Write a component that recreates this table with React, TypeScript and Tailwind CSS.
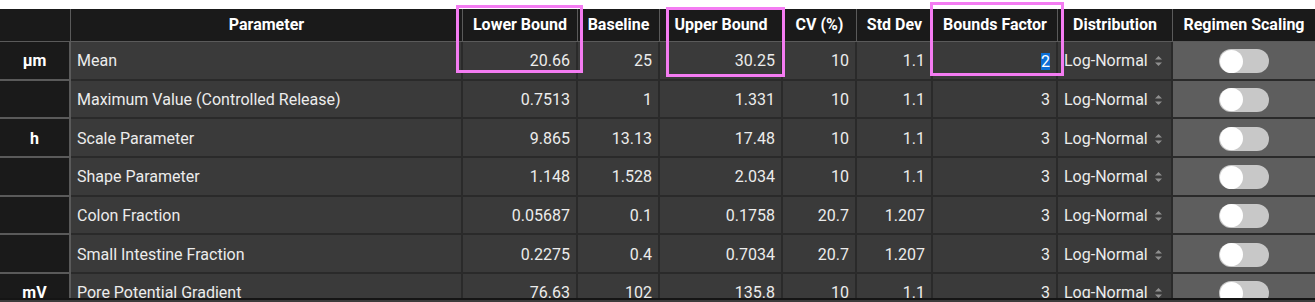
const rows = [
  { unit: 'µm', name: 'Mean', lower: '20.66', base: '25', upper: '30.25', cv: '10', sd: '1.1', factor: '2', selected: true },
  { unit: '', name: 'Maximum Value (Controlled Release)', lower: '0.7513', base: '1', upper: '1.331', cv: '10', sd: '1.1', factor: '3' },
  { unit: 'h', name: 'Scale Parameter', lower: '9.865', base: '13.13', upper: '17.48', cv: '10', sd: '1.1', factor: '3' },
  { unit: '', name: 'Shape Parameter', lower: '1.148', base: '1.528', upper: '2.034', cv: '10', sd: '1.1', factor: '3' },
  { unit: '', name: 'Colon Fraction', lower: '0.05687', base: '0.1', upper: '0.1758', cv: '20.7', sd: '1.207', factor: '3' },
  { unit: '', name: 'Small Intestine Fraction', lower: '0.2275', base: '0.4', upper: '0.7034', cv: '20.7', sd: '1.207', factor: '3' },
  { unit: 'mV', name: 'Pore Potential Gradient', lower: '76.63', base: '102', upper: '135.8', cv: '10', sd: '1.1', factor: '3' },
];

const headers = ['', 'Parameter', 'Lower Bound', 'Baseline', 'Upper Bound', 'CV (%)', 'Std Dev', 'Bounds Factor', 'Distribution', 'Regimen Scaling'];

const cols = 'grid grid-cols-[71px_392px_115px_82px_123px_74px_76px_125px_115px_142px]';

const SelectArrows = () => (
  <svg width="9" height="14" viewBox="0 0 9 14" className="shrink-0">
    <path d="M1 5.5 L4.5 2 L8 5.5 Z" fill="#8f8f8f" />
    <path d="M1 8.5 L4.5 12 L8 8.5 Z" fill="#8f8f8f" />
  </svg>
);

const Toggle = () => (
  <div className="flex h-[24px] w-[50px] items-center rounded-full bg-[#c8c8c8] pl-[1px]">
    <div className="h-[23px] w-[23px] rounded-full bg-white" />
  </div>
);

const Num = ({ v }: { v: string }) => (
  <div className="flex items-center justify-end border-r-2 border-b-2 border-[#2a2a2a] bg-[#3a3a3a] pt-[2px] pr-[6px]">{v}</div>
);

export default function App() {
  return (
    <div className="relative h-[302px] w-[1315px] overflow-hidden bg-white font-['Roboto',sans-serif] text-[16px] text-[#ececec]">
      <div className="mt-[9px] h-[289px] overflow-hidden bg-[#3a3a3a]">
        <div className={`${cols} h-[33px] bg-[#1a1a1a] font-bold text-white`}>
          {headers.map((h, i) => (
            <div
              key={i}
              className="flex items-center justify-center border-r border-b border-[#5a5a5a] last:border-r-0"
            >
              {h}
            </div>
          ))}
        </div>
        {rows.map((r, i) => (
          <div key={i} className={`${cols} h-[38.67px]`}>
            <div className="flex items-center justify-center border-r-2 border-b-2 border-[#5a5a5a] bg-[#1a1a1a] pt-[2px] font-bold text-white">
              {r.unit}
            </div>
            <div className="flex items-center border-r-2 border-b-2 border-[#2a2a2a] bg-[#3a3a3a] pt-[2px] pl-[6px]">{r.name}</div>
            <Num v={r.lower} />
            <Num v={r.base} />
            <Num v={r.upper} />
            <Num v={r.cv} />
            <Num v={r.sd} />
            <div className="flex items-center justify-end border-r-2 border-b-2 border-[#2a2a2a] bg-[#3a3a3a] pt-[2px] pr-[6px]">
              {r.selected ? <span className="bg-[#0b6fd6] leading-[17px] text-white">{r.factor}</span> : r.factor}
            </div>
            <div className="flex items-center justify-between border-r-2 border-b-2 border-[#2a2a2a] bg-[#3a3a3a] pt-[2px] pr-[8px] pl-[6px]">
              <span>Log-Normal</span>
              <SelectArrows />
            </div>
            <div className="flex items-center justify-center border-b-2 border-[#2a2a2a] bg-[#5e5e5e] pt-[2px]">
              <Toggle />
            </div>
          </div>
        ))}
      </div>
      <div className="h-[2px] bg-[#151515]" />
      <div className="h-[2px] bg-[#3c3c3c]" />

      <div className="pointer-events-none absolute top-[5px] left-[456px] h-[68px] w-[127px] border-[3px] border-[#f47cf2]" />
      <div className="pointer-events-none absolute top-[7px] left-[666px] h-[70px] w-[119px] border-[3px] border-[#f47cf2]" />
      <div className="pointer-events-none absolute top-[2px] left-[930px] h-[74px] w-[134px] border-[3px] border-[#f47cf2]" />
    </div>
  );
}
